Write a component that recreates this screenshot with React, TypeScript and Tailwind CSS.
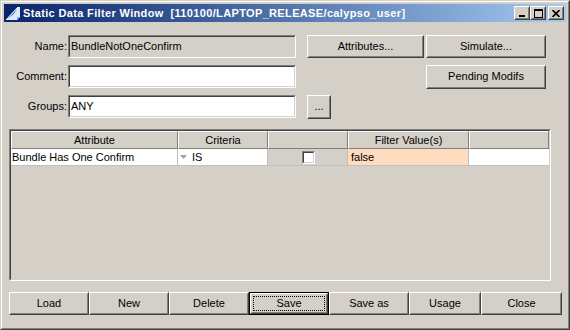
import type { ReactNode } from 'react'

const FONT = "font-['Liberation_Sans',Arial,sans-serif]"

type BtnProps = {
  label: ReactNode
  className?: string
  focused?: boolean
}

function Btn({ label, className = '', focused = false }: BtnProps) {
  return (
    <div className={`flex ${focused ? 'border border-black' : ''} ${className}`}>
      <div className="flex flex-1 border border-t-white border-l-white border-r-[#404040] border-b-[#404040]">
        <div className="flex flex-1 items-center justify-center border border-t-[#d4d0c8] border-l-[#d4d0c8] border-r-[#808080] border-b-[#808080]">
          {focused ? (
            <div className="m-[1px] flex flex-1 self-stretch items-center justify-center border border-dotted border-black">
              {label}
            </div>
          ) : (
            label
          )}
        </div>
      </div>
    </div>
  )
}

function Field({ value, gray = false }: { value?: string; gray?: boolean }) {
  return (
    <div className="flex h-[23px] w-[228px] border border-t-[#808080] border-l-[#808080] border-r-white border-b-white">
      <div
        className={`flex flex-1 items-center border border-t-[#404040] border-l-[#404040] border-r-[#d4d0c8] border-b-[#d4d0c8] pl-[1px] ${
          gray ? 'bg-[#d4d0c8]' : 'bg-white'
        }`}
      >
        {value}
      </div>
    </div>
  )
}

function TitleBtn({ children, className = '' }: { children: ReactNode; className?: string }) {
  return (
    <div className={`flex h-[14px] w-[16px] border border-t-white border-l-white border-r-[#404040] border-b-[#404040] bg-[#d4d0c8] ${className}`}>
      <div className="flex flex-1 items-center justify-center border border-t-[#d4d0c8] border-l-[#d4d0c8] border-r-[#808080] border-b-[#808080]">
        {children}
      </div>
    </div>
  )
}

const cols = [
  { label: 'Attribute', w: 'w-[167px]' },
  { label: 'Criteria', w: 'w-[90px]' },
  { label: '', w: 'w-[80px]' },
  { label: 'Filter Value(s)', w: 'w-[121px]' },
  { label: '', w: 'w-[80px]' },
]

export default function App() {
  return (
    <div className={`h-[330px] w-[570px] ${FONT} text-[11px] text-black`}>
      {/* window frame */}
      <div className="flex h-full w-full border border-t-[#d4d0c8] border-l-[#d4d0c8] border-r-[#404040] border-b-[#404040]">
        <div className="flex flex-1 flex-col border border-t-white border-l-white border-r-[#808080] border-b-[#808080] bg-[#d4d0c8] p-[2px]">
          {/* title bar */}
          <div className="flex h-[18px] items-center bg-gradient-to-r from-[#0a246a] to-[#a6caf0] pr-[2px]">
            <svg width="16" height="16" viewBox="0 0 16 16" className="ml-[1px] shrink-0">
              <path d="M1 15 L13 2 L15 2 L15 12 L12 15 Z" fill="#dfeaf8" />
              <path d="M1 15 L13 2 L9 9 Z" fill="#4a7fd0" />
              <path d="M12 15 L15 12 L12 12 Z" fill="#7fa6dd" />
              <path d="M1 15 L13 2" stroke="#ffffff" strokeWidth="1" />
            </svg>
            <span className="ml-[2px] whitespace-pre text-[11px] font-bold tracking-[0.35px] text-white">
              Static Data Filter Window  [110100/LAPTOP_RELEASE/calypso_user]
            </span>
            <div className="ml-auto flex items-center">
              <TitleBtn>
                <div className="mt-[5px] ml-[-1px] h-[2px] w-[6px] bg-black" />
              </TitleBtn>
              <TitleBtn>
                <div className="h-[9px] w-[9px] border border-t-2 border-black" />
              </TitleBtn>
              <TitleBtn className="ml-[2px]">
                <svg width="8" height="7" viewBox="0 0 8 7">
                  <path d="M0.5 0 L7.5 7 M7.5 0 L0.5 7" stroke="black" strokeWidth="1.6" />
                </svg>
              </TitleBtn>
            </div>
          </div>

          {/* form rows */}
          <div className="mt-[13px] flex h-[23px] items-center">
            <div className="w-[64px] pr-[1px] text-right">Name:</div>
            <Field value="BundleNotOneConfirm" gray />
            <Btn label="Attributes..." className="ml-[11px] h-[23px] w-[117px]" />
            <Btn label="Simulate..." className="ml-[2px] h-[23px] w-[120px]" />
          </div>
          <div className="mt-[7px] flex h-[23px] items-center">
            <div className="w-[64px] pr-[1px] text-right">Comment:</div>
            <Field />
            <Btn label="Pending Modifs" className="ml-[130px] h-[24px] w-[120px]" />
          </div>
          <div className="mt-[7px] flex h-[23px] items-center">
            <div className="w-[64px] pr-[1px] text-right">Groups:</div>
            <Field value="ANY" />
            <Btn label="..." className="ml-[11px] h-[24px] w-[24px]" />
          </div>

          {/* table */}
          <div className="mt-[11px] ml-[5px] flex h-[152px] w-[542px] border border-t-[#808080] border-l-[#808080] border-r-white border-b-white">
            <div className="flex flex-1 flex-col border border-t-[#404040] border-l-[#404040] border-r-[#d4d0c8] border-b-[#d4d0c8]">
              <div className="flex h-[18px]">
                {cols.map((c, i) => (
                  <div
                    key={i}
                    className={`${c.w} flex items-center justify-center border border-t-white border-l-white border-r-[#808080] border-b-[#808080]`}
                  >
                    {c.label}
                  </div>
                ))}
              </div>
              <div className="flex h-[17px] border-b border-[#c0c0c0]">
                <div className="flex w-[167px] items-center border-r border-[#c0c0c0] bg-white pl-[1px]">
                  Bundle Has One Confirm
                </div>
                <div className="flex w-[90px] items-center border-r border-[#c0c0c0] bg-white pl-[2px]">
                  <svg width="7" height="4" viewBox="0 0 7 4" className="mr-[5px]">
                    <path d="M0 0 L7 0 L3.5 4 Z" fill="#a0a0a0" />
                  </svg>
                  IS
                </div>
                <div className="flex w-[80px] items-center justify-center border-r border-[#c0c0c0]">
                  <div className="ml-[1px] flex h-[13px] w-[13px] border border-t-[#808080] border-l-[#808080] border-r-white border-b-white">
                    <div className="flex-1 border border-t-[#404040] border-l-[#404040] border-r-[#d4d0c8] border-b-[#d4d0c8] bg-white" />
                  </div>
                </div>
                <div className="flex w-[121px] items-center border-r border-[#c0c0c0] bg-[#ffdcc0] pl-[3px]">
                  false
                </div>
                <div className="w-[80px] bg-white" />
              </div>
            </div>
          </div>

          {/* bottom buttons */}
          <div className="mt-[11px] ml-[5px] flex h-[23px]">
            <Btn label="Load" className="w-[80px]" />
            <Btn label="New" className="w-[80px]" />
            <Btn label="Delete" className="w-[80px]" />
            <Btn label="Save" className="w-[80px]" focused />
            <Btn label="Save as" className="w-[80px]" />
            <Btn label="Usage" className="w-[72px]" />
            <Btn label="Close" className="w-[81px]" />
          </div>
        </div>
      </div>
    </div>
  )
}
